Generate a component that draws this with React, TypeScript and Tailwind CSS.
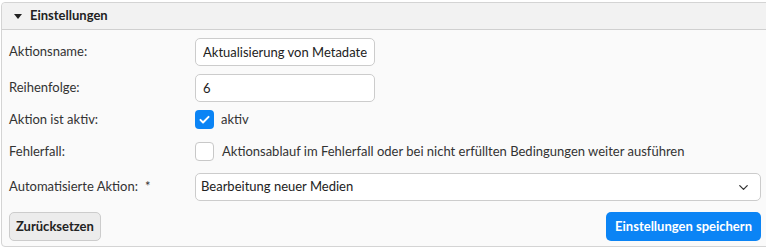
import { ChevronDown } from "lucide-react";

const font = { fontFamily: "Lato, 'Open Sans', sans-serif" };

function Row({ label, className, children }: { label: React.ReactNode; className: string; children: React.ReactNode }) {
  return (
    <div className={`flex items-center ${className}`}>
      <div className="w-[186px] shrink-0">{label}</div>
      <div className="flex-1 flex items-center">{children}</div>
    </div>
  );
}

export default function App() {
  return (
    <div className="w-[766px] h-[251px] overflow-hidden bg-white text-[#333] text-[13px]" style={font}>
      <div className="mt-[2px] ml-[1px] w-[774px] rounded-tl-[4px] rounded-bl-[4px] border border-[#d4d4d4] bg-[#fafafa]">
        {/* Kopf */}
        <div className="flex items-center h-[27px] pl-[12px] gap-[8px] bg-[#f2f2f2] border-b border-[#d0d0d0] rounded-tl-[4px]">
          <span className="w-0 h-0 border-l-[4px] border-r-[4px] border-t-[5px] border-l-transparent border-r-transparent border-t-[#222]" />
          <span className="font-bold text-[13px] text-[#222]">Einstellungen</span>
        </div>

        <div className="pl-[7px] pr-[13px] pt-[8px] pb-[5px]">
          <Row label="Aktionsname:" className="h-[28px]">
            <input
              readOnly
              value="Aktualisierung von Metadaten"
              className="w-[180px] h-[28px] px-[7px] rounded-[5px] border border-[#ccc] bg-white text-[13px] text-[#222] outline-none"
              style={font}
            />
          </Row>

          <Row label="Reihenfolge:" className="h-[28px] mt-[8px]">
            <input
              readOnly
              value="6"
              className="w-[180px] h-[28px] px-[7px] rounded-[5px] border border-[#ccc] bg-white text-[13px] text-[#222] outline-none"
              style={font}
            />
          </Row>

          <Row label="Aktion ist aktiv:" className="h-[27px] mt-[4px]">
            <span className="flex items-center justify-center w-[19px] h-[19px] rounded-[4px] bg-[#0b84f5]">
              <svg width="13" height="13" viewBox="0 0 16 16" fill="none">
                <path d="M3 8.5l3.2 3.2L13 4.8" stroke="white" strokeWidth="2.4" strokeLinecap="round" strokeLinejoin="round" />
              </svg>
            </span>
            <span className="ml-[7px]">aktiv</span>
          </Row>

          <Row label="Fehlerfall:" className="h-[27px] mt-[5px]">
            <span className="w-[19px] h-[19px] rounded-[4px] border border-[#c8c8c8] bg-white" />
            <span className="ml-[8px]">Aktionsablauf im Fehlerfall oder bei nicht erfüllten Bedingungen weiter ausführen</span>
          </Row>

          <Row
            label={
              <span className="flex gap-[7px]">
                Automatisierte Aktion: <span>*</span>
              </span>
            }
            className="h-[28px] mt-[8px]"
          >
            <div className="flex-1 flex items-center justify-between h-[28px] pl-[5px] pr-[9px] rounded-[5px] border border-[#ccc] bg-white text-[#222]">
              <span>Bearbeitung neuer Medien</span>
              <ChevronDown size={15} strokeWidth={2} className="text-[#333]" />
            </div>
          </Row>

          <div className="flex justify-between mt-[11px]">
            <button className="h-[29px] px-[6px] rounded-[5px] border border-[#ccc] bg-[#ececec] font-bold text-[13px] text-[#222]" style={font}>
              Zurücksetzen
            </button>
            <button className="h-[29px] px-[9px] rounded-[5px] bg-[#0b84f5] font-bold text-[13px] text-white" style={font}>
              Einstellungen speichern
            </button>
          </div>
        </div>
      </div>
    </div>
  );
}
